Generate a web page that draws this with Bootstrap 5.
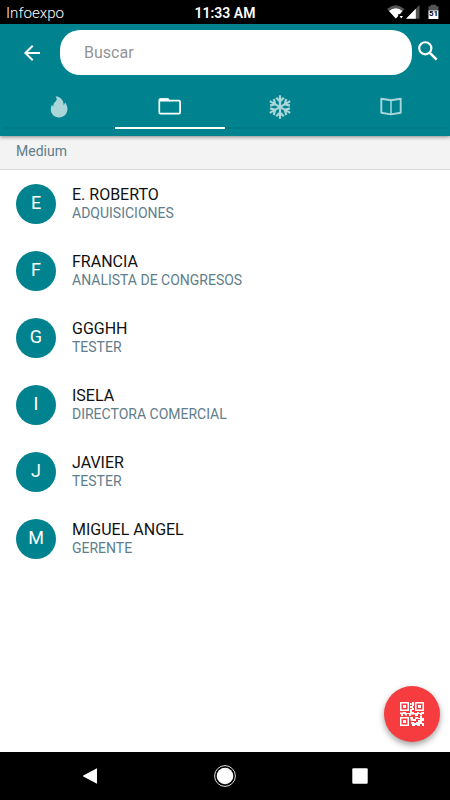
<!DOCTYPE html>
<html lang="es">
<head>
<meta charset="utf-8">
<meta name="viewport" content="width=device-width, initial-scale=1">
<title>Infoexpo</title>
<link href="https://cdn.jsdelivr.net/npm/bootstrap@5.3.0/dist/css/bootstrap.min.css" rel="stylesheet">
<style>
  body { font-family: Roboto, "Noto Sans", sans-serif; background: #fff; }
  svg { display: block; flex: none; }
  .screen { width: 450px; height: 800px; }
  .status { height: 24px; background: #000; color: #fff; display: grid; grid-template-columns: 1fr auto 1fr; }
  .brand { font-size: 15.2px; font-weight: 300; line-height: 24px; padding-left: 6px; margin-top: 1px; }
  .clock { font-size: 14px; font-weight: 600; line-height: 24px; margin-top: 1px; }
  .signals { padding-right: 8px; }
  .appbar { height: 112px; background: #00838f; box-shadow: 0 1px 4px rgba(0,0,0,.45); z-index: 1; }
  .search-row { height: 57px; padding: 6px 9px 6px 20px; }
  .search-row .field { flex: none; width: 352px; height: 45px; margin-left: 16px; margin-right: 3px; border: 0; border-radius: 20px; padding: 0 24px; font-size: 16px; }
  .search-row .field::placeholder { color: #949494; opacity: 1; }
  .search-row .field:focus { box-shadow: none; }
  .tabs { height: 48px; padding: 0 4px; }
  .tabs .tab { height: 48px; padding: 5px 0 0; color: #aad6da; border-bottom: 2px solid #007c86; border-radius: 0; }
  .tabs .tab.active { color: #fff; border-color: #fff; }
  .section-title { height: 34px; padding: 0 16px 2px; background: #f3f3f3; border-bottom: 1px solid #dcdcdc; color: #607d8b; font-size: 14px; }
  .contact { height: 67px; padding: 0 16px; gap: 16px; }
  .avatar { width: 40px; height: 40px; background: #00838f; font-size: 18px; padding-bottom: 2px; }
  .person { font-size: 16px; line-height: 19px; color: #111; }
  .role { font-size: 14px; line-height: 19px; color: #607d8b; }
  .fab { width: 56px; height: 56px; right: 10px; bottom: 58px; background: #f63c3e; box-shadow: 0 3px 6px rgba(0,0,0,.38); }
  .sysnav { height: 48px; background: #000; padding: 0 82px; }
</style>
</head>
<body>
<div class="screen d-flex flex-column position-relative overflow-hidden">
  <div class="status">
    <div class="brand">Infoexpo</div>
    <div class="clock">11:33 AM</div>
    <div class="signals d-flex justify-content-end">
      <svg width="56" height="24" viewBox="0 0 56 24" fill="#fff">
        <path d="M1 9Q9.7 1.600 18.500 9L9.800 18.600Z" fill="#555"/>
        <path d="M3 11Q9.700 5.600 16.500 11L14 14H12v2.200l-2.200 2.400Z"/>
        <path d="M13.600 16h3.400l-1.700 2.400Z"/>
        <path d="M33.500 5v13.700H20Z" fill="#555"/>
        <path d="M29.800 8.800v9.900H20Z"/>
        <path d="M44.800 4.800h5.400v1.500h2.200V11H42.500V6.300h2.300Z" fill="#555"/>
        <path d="M42.500 10.500h9.900V19h-9.900Z"/>
        <text x="47.500" y="15.500" font-size="8" font-weight="700" text-anchor="middle" fill="#000">51</text>
      </svg>
    </div>
  </div>

  <header class="appbar position-relative">
    <div class="search-row d-flex align-items-center">
      <svg width="24" height="24" viewBox="0 0 24 24" fill="#fff"><path d="M20 11H7.830l5.590-5.590L12 4l-8 8 8 8 1.410-1.410L7.830 13H20z"/></svg>
      <input class="field form-control" type="text" placeholder="Buscar" aria-label="Buscar">
      <svg width="26" height="26" viewBox="0 0 24 24" fill="none" stroke="#fff" stroke-width="2" class="align-self-start mt-2"><circle cx="9.500" cy="9.500" r="5.600"/><path d="M13.700 13.700L20 20" stroke-width="2.400"/></svg>
    </div>
    <nav class="tabs d-flex">
      <a class="tab flex-fill d-flex justify-content-center align-items-center" href="#" aria-label="Hot">
        <svg width="24" height="24" viewBox="0 0 24 24" fill="currentColor"><path d="M8.500 1.200C13 1.500 16.900 5 16.600 10c.9-.7 1.300-1.700 1.300-2.800 1.700 2 2.700 4.600 2.500 7.400-.3 4.600-3.600 7.800-8.200 7.800-4.800 0-8.400-3.300-8.400-7.700 0-2 .4-3.800 1.200-5.300.3.900.7 1.500 1.300 2C6.300 9.200 7 8 8.500 6.600 10.200 5 10 3 8.500 1.200z"/></svg>
      </a>
      <a class="tab active flex-fill d-flex justify-content-center align-items-center" href="#" aria-label="Medium">
        <svg width="24" height="24" viewBox="0 0 24 24"><path d="M1.300 5V17.400Q1.300 18.600 2.500 18.600H20.900Q22.100 18.600 22.100 17.400V6.900Q22.100 5.700 20.900 5.700H11.500L10 4H2.500Q1.300 4 1.300 5.200z" fill="none" stroke="currentColor" stroke-width="1.700"/><path d="M1.500 3.500h8.500l2 3H1.500z" fill="currentColor"/></svg>
      </a>
      <a class="tab flex-fill d-flex justify-content-center align-items-center" href="#" aria-label="Cold">
        <svg width="24" height="24" viewBox="0 0 24 24" fill="none" stroke="currentColor" stroke-width="2.200">
          <g id="arms"><path d="M12 .2v23.600M8.200 2.700L12 6.400l3.800-3.700M8.200 21.300l3.800-3.700 3.800 3.700"/></g>
          <use href="#arms" transform="rotate(60 12 12)"/>
          <use href="#arms" transform="rotate(120 12 12)"/>
        </svg>
      </a>
      <a class="tab flex-fill d-flex justify-content-center align-items-center" href="#" aria-label="Catálogo">
        <svg width="24" height="24" viewBox="0 0 24 24" fill="none" stroke="currentColor" stroke-width="1.900" stroke-linejoin="round"><path d="M12 5.300L2.300 3.700v14l9.700 1.700 9.700-1.700v-14z"/><path d="M12 5.300v14" stroke-width="1.500"/></svg>
      </a>
    </nav>
  </header>

  <div class="section-title d-flex align-items-center">Medium</div>

  <main class="flex-grow-1">
    <div class="contact d-flex align-items-center">
      <div class="avatar rounded-circle text-white d-flex align-items-center justify-content-center">E</div>
      <div><div class="person">E. ROBERTO</div><div class="role">ADQUISICIONES</div></div>
    </div>
    <div class="contact d-flex align-items-center">
      <div class="avatar rounded-circle text-white d-flex align-items-center justify-content-center">F</div>
      <div><div class="person">FRANCIA</div><div class="role">ANALISTA DE CONGRESOS</div></div>
    </div>
    <div class="contact d-flex align-items-center">
      <div class="avatar rounded-circle text-white d-flex align-items-center justify-content-center">G</div>
      <div><div class="person">GGGHH</div><div class="role">TESTER</div></div>
    </div>
    <div class="contact d-flex align-items-center">
      <div class="avatar rounded-circle text-white d-flex align-items-center justify-content-center">I</div>
      <div><div class="person">ISELA</div><div class="role">DIRECTORA COMERCIAL</div></div>
    </div>
    <div class="contact d-flex align-items-center">
      <div class="avatar rounded-circle text-white d-flex align-items-center justify-content-center">J</div>
      <div><div class="person">JAVIER</div><div class="role">TESTER</div></div>
    </div>
    <div class="contact d-flex align-items-center">
      <div class="avatar rounded-circle text-white d-flex align-items-center justify-content-center">M</div>
      <div><div class="person">MIGUEL ANGEL</div><div class="role">GERENTE</div></div>
    </div>
  </main>

  <button class="fab position-absolute btn rounded-circle p-0 border-0 d-flex align-items-center justify-content-center" type="button" aria-label="Escanear QR">
    <svg width="24" height="24" viewBox="0 0 24 24" fill="#fff" fill-rule="evenodd">
      <path d="M0 0h9v9H0zM1.500 1.500v6h6v-6zM3 3h3v3H3zM15 0h9v9h-9zM16.500 1.500v6h6v-6zM18 3h3v3h-3zM0 15h9v9H0zM1.500 16.500v6h6v-6zM3 18h3v3H3z"/>
      <path d="M10 1h1.500v2H10zM12 0h2v4h-1v2h1v2h-2V6h-2V4h2zM10 7h2v3h2v1h3v-1h2v1h2v-1h3v2h-2v1.500h-2V12h-2v2h-3v-1.500h-4V14H9v-2H7v1.500H5V12H3v2H1v-2H0v-1.500h3V10h3v1h4zM10 15h3v2h2v-2h3v1h2v-2h2v2h2v3h-2v2h2v3h-2v-2h-2v2h-3v-1h-2v1h-3v-2h-1v-2h3v-1h-3zM16 17v2h-2v2h2v-1h2v-2h2v-1z"/>
    </svg>
  </button>

  <footer class="sysnav d-flex justify-content-between align-items-center">
    <svg width="16" height="16" viewBox="0 0 16 16" fill="#fff"><path d="M15 .2v15.600L1.300 8.600Q.6 8 1.300 7.400z"/></svg>
    <svg width="22" height="22" viewBox="0 0 22 22"><circle cx="11" cy="11" r="10.400" fill="none" stroke="#ddd" stroke-width="1"/><circle cx="11" cy="11" r="8.300" fill="#fff"/></svg>
    <svg width="16" height="16" viewBox="0 0 16 16"><rect x=".3" y=".3" width="15.400" height="15.400" rx="1" fill="#fff"/></svg>
  </footer>
</div>
<script src="https://cdn.jsdelivr.net/npm/bootstrap@5.3.0/dist/js/bootstrap.bundle.min.js"></script>
</body>
</html>
